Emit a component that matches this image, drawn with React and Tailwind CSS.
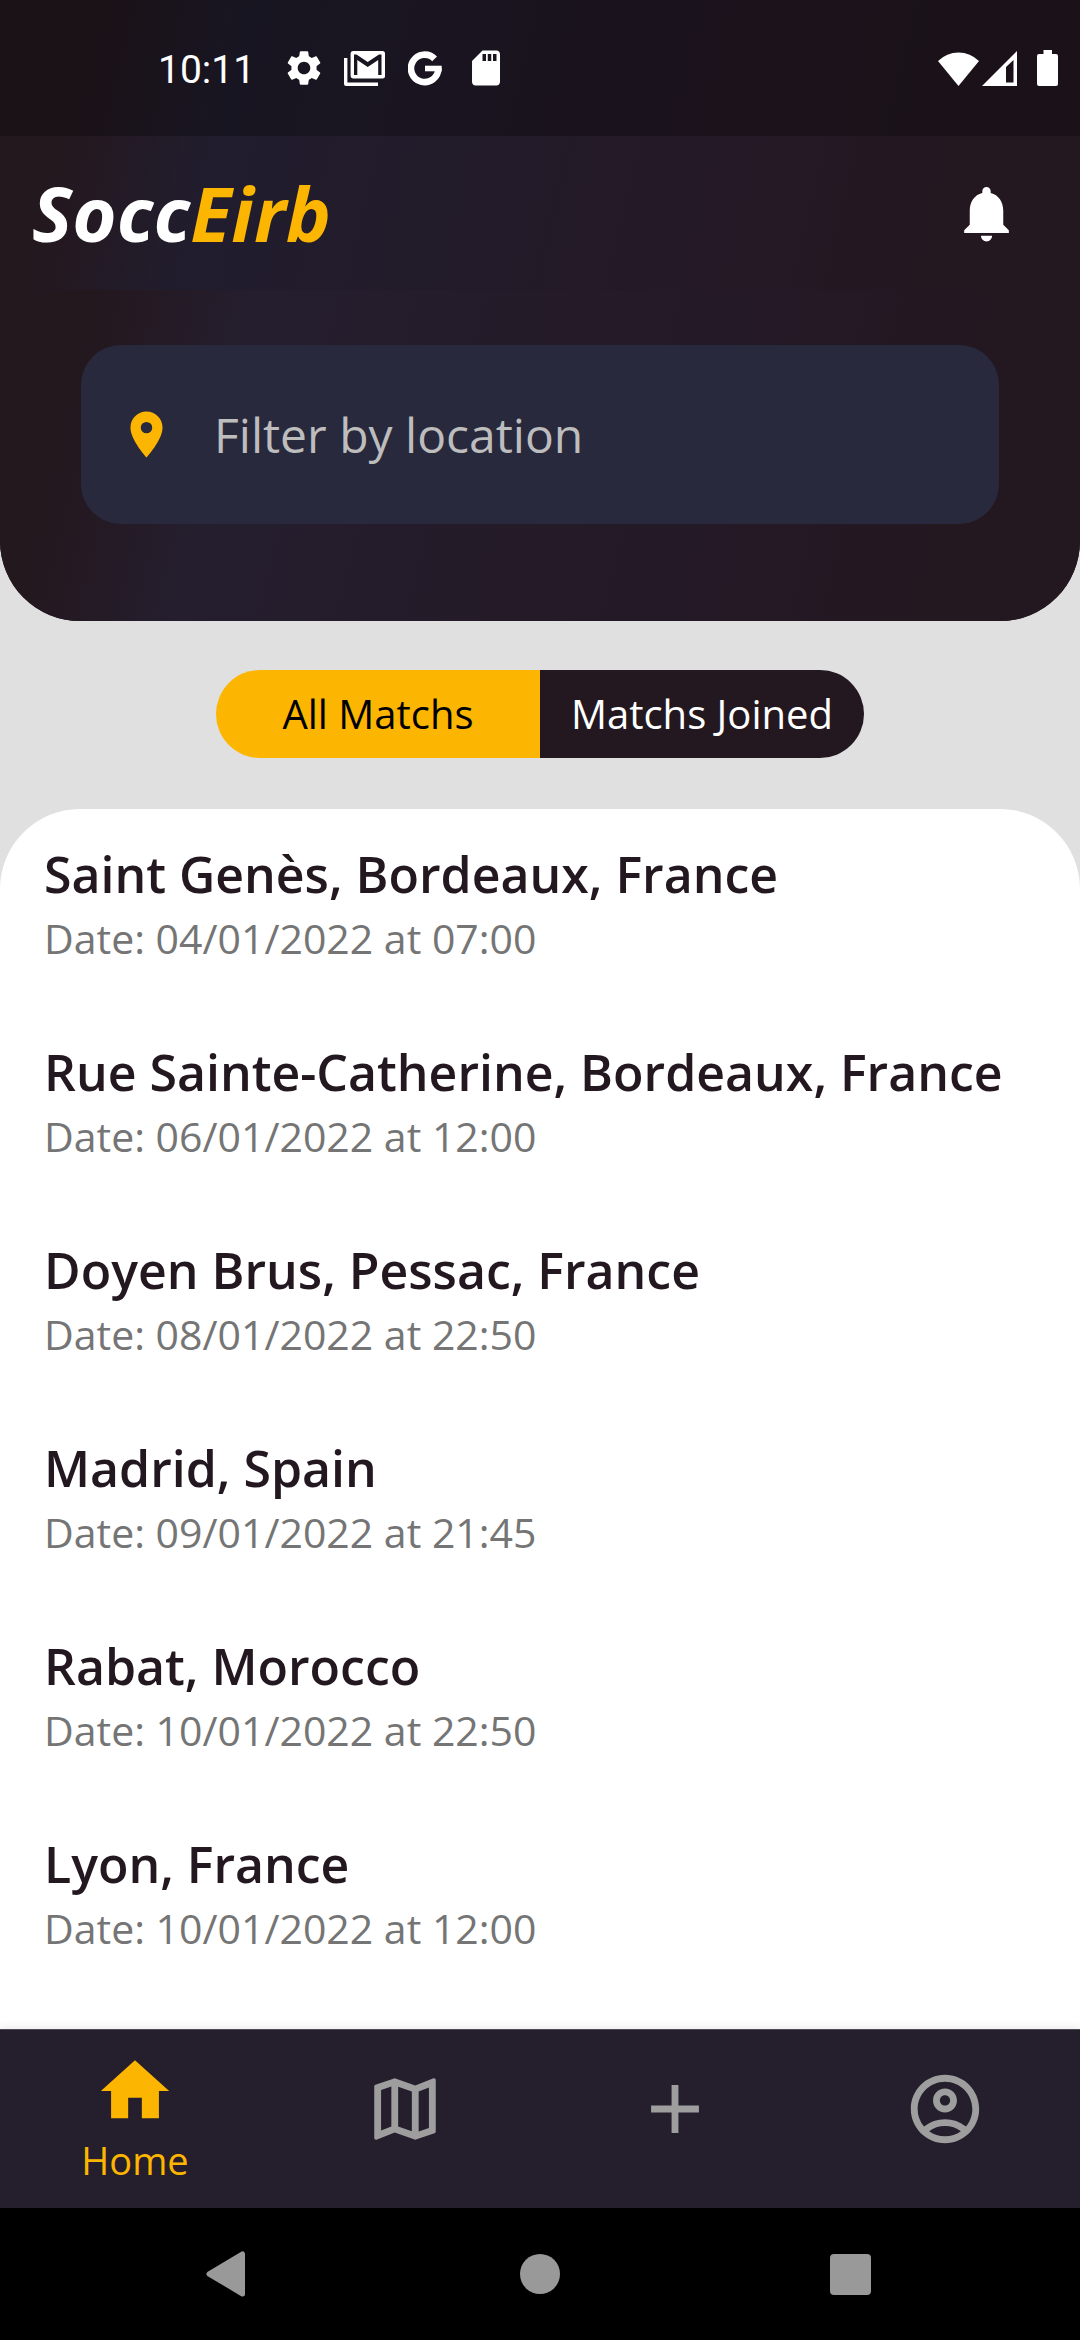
import React, { useState } from 'react';
import {
  MdSettings,
  MdSdCard,
  MdNotifications,
  MdLocationOn,
  MdHome,
  MdOutlineMap,
  MdAdd,
  MdOutlineAccountCircle,
} from 'react-icons/md';

const matches = [
  { place: 'Saint Genès, Bordeaux, France', date: '04/01/2022', time: '07:00' },
  { place: 'Rue Sainte-Catherine, Bordeaux, France', date: '06/01/2022', time: '12:00' },
  { place: 'Doyen Brus, Pessac, France', date: '08/01/2022', time: '22:50' },
  { place: 'Madrid, Spain', date: '09/01/2022', time: '21:45' },
  { place: 'Rabat, Morocco', date: '10/01/2022', time: '22:50' },
  { place: 'Lyon, France', date: '10/01/2022', time: '12:00' },
];

const tabs = [
  { label: 'Home', icon: MdHome },
  { label: 'Map', icon: MdOutlineMap },
  { label: 'Add match', icon: MdAdd },
  { label: 'Profile', icon: MdOutlineAccountCircle },
];

function MailStackIcon() {
  return (
    <svg width="41" height="35" viewBox="0 0 41 35" fill="#fff" aria-hidden="true">
      <path d="M0 7h3.4v24.4H34V35H2a2 2 0 0 1-2-2z" />
      <path
        fillRule="evenodd"
        d="M9 0h29.5A2.5 2.5 0 0 1 41 2.5V25a2.5 2.5 0 0 1-2.5 2.5H9A2.5 2.5 0 0 1 6.6 25V2.5A2.5 2.5 0 0 1 9 0zM10 3.5V24h3.3V9l10.4 7 10.5-7v15h3.3V3.5H35L23.7 11 12.5 3.5z"
      />
    </svg>
  );
}

function GoogleIcon() {
  return (
    <svg width="34" height="35" viewBox="0 0 34 35" fill="none" stroke="#fff" aria-hidden="true">
      <path d="M26.6 7.9A13.7 13.7 0 1 0 30.4 17.5" strokeWidth="6.6" />
      <path d="M17 17.5H33.7" strokeWidth="5.6" />
    </svg>
  );
}

function WifiIcon() {
  return (
    <svg width="41" height="35" viewBox="0 0 41 35" fill="#fff" aria-hidden="true">
      <path d="M0 10A29 29 0 0 1 41 10L20.5 35z" />
    </svg>
  );
}

function SignalIcon() {
  return (
    <svg width="35" height="35" viewBox="0 0 35 35" fill="#fff" aria-hidden="true">
      <path fillRule="evenodd" d="M35 0v35H0zM31.5 9 24 16v15.5h7.5z" />
    </svg>
  );
}

function BatteryIcon() {
  return (
    <svg width="21" height="36" viewBox="0 0 21 36" fill="#fff" aria-hidden="true">
      <path d="M6.5 0H15v4h4a2 2 0 0 1 2 2v28a2 2 0 0 1-2 2H2a2 2 0 0 1-2-2V6a2 2 0 0 1 2-2h4.5z" />
    </svg>
  );
}

function StatusBar() {
  return (
    <div className="flex h-[136px] items-center justify-between bg-black/25 pl-[158px] pr-[22px] text-white">
      <div className="flex items-center">
        <span className="pt-[3px] font-[Roboto,sans-serif] text-[39px] leading-[48px]">10:11</span>
        <div className="ml-[28px] flex items-center gap-[19px]">
          <MdSettings size={42} />
          <MailStackIcon />
          <span className="flex w-[42px] justify-center">
            <GoogleIcon />
          </span>
          <MdSdCard size={42} />
        </div>
      </div>
      <div className="flex items-center">
        <WifiIcon />
        <span className="ml-[3px]">
          <SignalIcon />
        </span>
        <span className="ml-5">
          <BatteryIcon />
        </span>
      </div>
    </div>
  );
}

function Header() {
  return (
    <header className="overflow-hidden rounded-b-[80px] bg-[#24181f]">
      <div className="bg-[linear-gradient(104deg,#24181f_9%,#211d2e_22%,#241926_65%,#231820_88%)]">
        <StatusBar />
        <div className="flex h-[154px] items-center justify-between pl-8 pr-[60px]">
          <h1 className="text-[76px] font-bold italic leading-[88px] text-white">
            Socc<span className="text-[#fcb500]">Eirb</span>
          </h1>
          <button type="button" aria-label="Notifications" className="text-white">
            <MdNotifications size={67} />
          </button>
        </div>
      </div>
      <div className="bg-[linear-gradient(104deg,#24181f_9%,#251e2e_22%,#241926_65%,#231820_88%)] px-[81px] pb-[97px] pt-[55px]">
        <label className="flex h-[179px] items-center gap-10 rounded-[40px] bg-[#29293d] pl-[38px] pr-10">
          <MdLocationOn size={55} className="shrink-0 text-[#fcb500]" />
          <input
            type="text"
            aria-label="Filter by location"
            placeholder="Filter by location"
            className="w-full min-w-0 bg-transparent text-[48px] leading-[64px] text-white outline-none placeholder:text-[#bdbdbd] placeholder:opacity-100"
          />
        </label>
      </div>
    </header>
  );
}

function MatchToggle() {
  const [selected, setSelected] = useState('all');
  const active = 'bg-[#fcb500] text-black';
  const idle = 'bg-[#231820] text-white';
  return (
    <div className="px-[20%] pb-[51px] pt-[49px]">
      <div className="grid grid-cols-2 overflow-hidden rounded-full text-[40px] leading-[88px]">
        <button
          type="button"
          aria-pressed={selected === 'all'}
          onClick={() => setSelected('all')}
          className={selected === 'all' ? active : idle}
        >
          All Matchs
        </button>
        <button
          type="button"
          aria-pressed={selected === 'joined'}
          onClick={() => setSelected('joined')}
          className={selected === 'joined' ? active : idle}
        >
          Matchs Joined
        </button>
      </div>
    </div>
  );
}

function MatchList() {
  return (
    <ul className="flex flex-1 flex-col gap-[74px] rounded-t-[80px] bg-white px-11 pb-10 pt-[33px]">
      {matches.map((m) => (
        <li key={m.place}>
          <h2 className="text-[50px] font-semibold leading-[64px] text-[#231820]">{m.place}</h2>
          <p className="mt-1 text-[41px] leading-[56px] text-[#757575]">
            Date: {m.date} at {m.time}
          </p>
        </li>
      ))}
    </ul>
  );
}

function TabBar() {
  const [current, setCurrent] = useState('Home');
  return (
    <nav className="grid h-[179px] grid-cols-4 border-t border-[#4c4a55] bg-[#251e2c] shadow-[0_-2px_8px_rgba(0,0,0,0.08)]">
      {tabs.map(({ label, icon: Icon }) => {
        const on = label === current;
        return (
          <button
            key={label}
            type="button"
            aria-label={label}
            onClick={() => setCurrent(label)}
            className={
              on
                ? 'flex flex-col items-center justify-center text-[#fcb500]'
                : 'flex flex-col items-center justify-center pb-5 text-[#9e9e9e]'
            }
          >
            <Icon size={82} />
            {on && <span className="text-[38px] leading-[56px]">{label}</span>}
          </button>
        );
      })}
    </nav>
  );
}

function SystemBar() {
  return (
    <div className="flex h-[132px] items-center justify-between bg-black pl-[206px] pr-[209px]">
      <button type="button" aria-label="Back">
        <svg width="44" height="46" viewBox="0 0 44 46" fill="#999" stroke="#999" strokeWidth="5" strokeLinejoin="round" aria-hidden="true">
          <path d="M3 23 36.5 3v40z" />
        </svg>
      </button>
      <button type="button" aria-label="Home screen" className="size-10 rounded-full bg-[#999]" />
      <button type="button" aria-label="Recent apps" className="size-[41px] rounded-[4px] bg-[#999]" />
    </div>
  );
}

export default function App() {
  return (
    <div className="flex min-h-screen flex-col bg-[#e0e0e0] font-['Open_Sans','Noto_Sans',sans-serif]">
      <Header />
      <main className="flex flex-1 flex-col">
        <MatchToggle />
        <MatchList />
      </main>
      <TabBar />
      <SystemBar />
    </div>
  );
}
